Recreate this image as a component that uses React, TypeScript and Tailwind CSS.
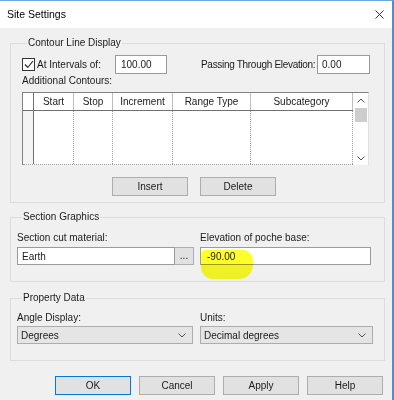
import React from 'react';

const cols = [
  { label: '', w: 'w-[11px]' },
  { label: 'Start', w: 'w-[40px]' },
  { label: 'Stop', w: 'w-[39px]' },
  { label: 'Increment', w: 'w-[60px]' },
  { label: 'Range Type', w: 'w-[78px]' },
  { label: 'Subcategory', w: 'w-[102px]' },
];

function Chevron({ up = false }: { up?: boolean }) {
  return (
    <svg width="8" height="5" viewBox="0 0 8 5" className="text-[#505050]">
      <path d={up ? 'M0.5 4.5 L4 1 L7.5 4.5' : 'M0.5 0.5 L4 4 L7.5 0.5'} fill="none" stroke="currentColor" strokeWidth="1" />
    </svg>
  );
}

function Group({ title, className, children }: { title: string; className: string; children: React.ReactNode }) {
  return (
    <fieldset className={`border border-[#dcdcdc] ${className}`}>
      <legend className="ml-[5px] px-[1px] leading-[12px] text-[#1a1a1a]">{title}</legend>
      {children}
    </fieldset>
  );
}

function Btn({ label, primary }: { label: string; primary?: boolean }) {
  return (
    <button
      className={`w-[76px] h-[19px] bg-[#e1e1e1] border flex items-center justify-center text-[#1a1a1a] ${
        primary ? 'border-[#0078d7]' : 'border-[#adadad]'
      }`}
    >
      {label}
    </button>
  );
}

function Select({ value, w }: { value: string; w: string }) {
  return (
    <div className={`${w} h-[18px] bg-[#e5e5e5] border border-[#adadad] flex items-center justify-between pl-[3px] pr-[6px]`}>
      <span>{value}</span>
      <Chevron />
    </div>
  );
}

export default function App() {
  return (
    <div className="w-[394px] h-[400px] overflow-hidden bg-[#f0f0f0] border-t border-t-[#6aa8e0] border-r-2 border-r-[#4a8fd4] font-['Liberation_Sans',sans-serif] text-[10px] text-[#1a1a1a]">
      {/* Title bar */}
      <div className="h-[27px] bg-white flex items-center justify-between pl-[7px] pr-[8px]">
        <span className="text-[10.5px] text-black">Site Settings</span>
        <svg width="9" height="9" viewBox="0 0 9 9" className="text-[#333]">
          <path d="M0.5 0.5 L8.5 8.5 M8.5 0.5 L0.5 8.5" stroke="currentColor" strokeWidth="1" />
        </svg>
      </div>

      <div className="pl-[10px] pr-[7px]">
        {/* Contour Line Display */}
        <Group title="Contour Line Display" className="mt-[9px] pl-[11px] pt-[6px] pb-[6px]">
          <div className="flex items-center h-[19px]">
            <div className="w-[13px] h-[13px] border border-[#333] bg-white flex items-center justify-center">
              <svg width="10" height="9" viewBox="0 0 10 9">
                <path d="M1 4.5 L3.8 7.5 L9 1" fill="none" stroke="#222" strokeWidth="1.1" />
              </svg>
            </div>
            <span className="ml-[2px] w-[78px]">At Intervals of:</span>
            <div className="w-[52px] h-[19px] bg-white border border-[#9a9a9a] flex items-center pl-[5px]">100.00</div>
            <span className="ml-[34px] w-[116px] shrink-0 whitespace-nowrap tracking-[-0.3px]">Passing Through Elevation:</span>
            <div className="w-[53px] h-[19px] bg-white border border-[#9a9a9a] flex items-center pl-[4px]">0.00</div>
          </div>
          <div className="mt-[1px] leading-[12px]">Additional Contours:</div>

          {/* Table */}
          <div className="mt-[5px] w-[347px] h-[73px] bg-white border-t border-l border-t-[#828282] border-l-[#828282] border-r border-r-[#e0e0e0] flex">
            <div className="flex flex-col">
              <div className="flex h-[18px] border-b border-[#707070]">
                {cols.map((c, i) => (
                  <div
                    key={i}
                    className={`${c.w} h-full flex items-center justify-center ${i === 0 ? 'border-r border-[#707070]' : 'border-r border-[#bdbdbd]'}`}
                  >
                    {c.label}
                  </div>
                ))}
              </div>
              <div className="flex flex-1 border-b border-dotted border-[#9a9a9a]">
                {cols.map((c, i) => (
                  <div
                    key={i}
                    className={`${c.w} h-full ${
                      i === 0 ? 'border-r border-[#707070] bg-[#f4f4f4]' : 'border-r border-dotted border-[#9a9a9a]'
                    }`}
                  />
                ))}
              </div>
            </div>
            {/* Scrollbar */}
            <div className="w-[16px] flex flex-col items-center bg-white">
              <div className="h-[15px] flex items-center justify-center">
                <Chevron up />
              </div>
              <div className="w-[12px] h-[14px] bg-[#cdcdcd]" />
              <div className="flex-1" />
              <div className="h-[14px] flex items-center justify-center">
                <Chevron />
              </div>
            </div>
          </div>

          <div className="flex gap-[12px] ml-[90px] mt-[12px]">
            <Btn label="Insert" />
            <Btn label="Delete" />
          </div>
        </Group>

        {/* Section Graphics */}
        <Group title="Section Graphics" className="mt-[8px] pl-[6px] pt-[9px] pb-[16px]">
          <div className="flex">
            <div className="flex flex-col">
              <span className="leading-[12px]">Section cut material:</span>
              <div className="mt-[3px] flex">
                <div className="w-[158px] h-[18px] bg-white border border-[#9a9a9a] flex items-center pl-[4px]">Earth</div>
                <div className="w-[19px] h-[18px] bg-[#e1e1e1] border border-[#adadad] border-l-0 flex items-end justify-center pb-[3px] leading-none">
                  ...
                </div>
              </div>
            </div>
            <div className="flex flex-col ml-[6px] relative">
              <span className="leading-[12px]">Elevation of poche base:</span>
              <div className="mt-[3px] w-[171px] h-[18px] bg-white border border-[#9a9a9a] flex items-center pl-[6px]">-90.00</div>
              <div className="absolute left-[1px] top-[18px] w-[52px] h-[29px] bg-[#ffff2a] mix-blend-multiply rounded-tl-[4px] rounded-tr-[10px] rounded-br-[14px] rounded-bl-[12px]" />
            </div>
          </div>
        </Group>

        {/* Property Data */}
        <Group title="Property Data" className="mt-[10px] pl-[6px] pt-[8px] pb-[16px]">
          <div className="flex">
            <div className="flex flex-col">
              <span className="leading-[12px]">Angle Display:</span>
              <div className="mt-[2px]">
                <Select value="Degrees" w="w-[176px]" />
              </div>
            </div>
            <div className="flex flex-col ml-[7px]">
              <span className="leading-[12px]">Units:</span>
              <div className="mt-[2px]">
                <Select value="Decimal degrees" w="w-[173px]" />
              </div>
            </div>
          </div>
        </Group>

        <div className="flex gap-[8px] ml-[45px] mt-[15px]">
          <Btn label="OK" primary />
          <Btn label="Cancel" />
          <Btn label="Apply" />
          <Btn label="Help" />
        </div>
      </div>
    </div>
  );
}
